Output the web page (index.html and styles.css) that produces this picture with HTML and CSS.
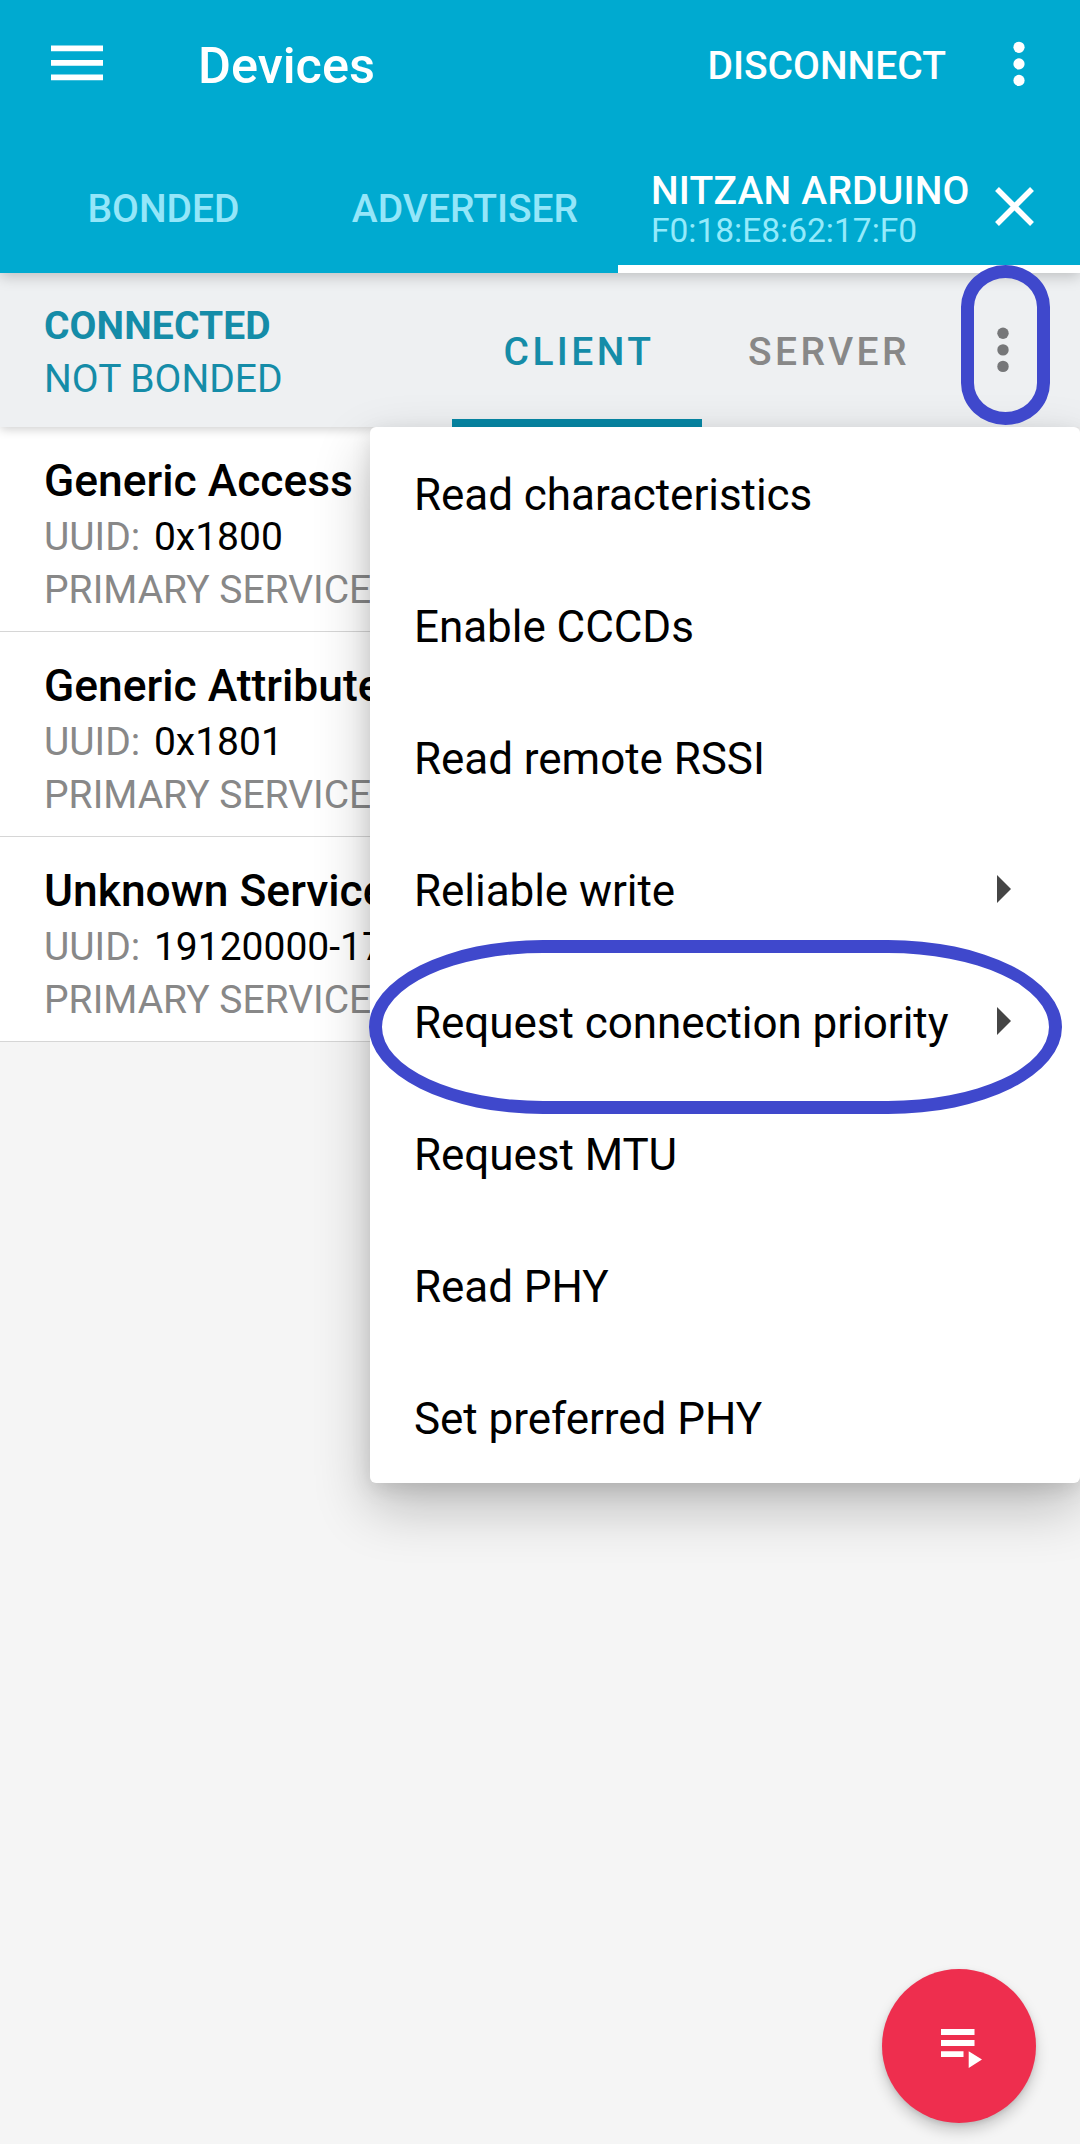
FILE: index.html
```html
<!DOCTYPE html>
<html lang="en">
<head>
<meta charset="utf-8">
<title>Devices</title>
<link rel="stylesheet" href="styles.css">
</head>
<body>
<div class="screen">
  <header class="appbar">
    <div class="toolbar">
      <svg class="menu-icon" viewBox="0 0 52 36"><path d="M0 .5h52v5.7H0zM0 15h52v5.7H0zM0 29.5h52v5.7H0z"/></svg>
      <h1 class="title">Devices</h1>
      <span class="action">DISCONNECT</span>
      <svg class="dots dots-light" viewBox="0 0 12 46"><circle cx="6" cy="6.3" r="5.6"/><circle cx="6" cy="22.9" r="5.6"/><circle cx="6" cy="39.4" r="5.6"/></svg>
    </div>
    <nav class="tabs">
      <span class="tab tab-bonded">BONDED</span>
      <span class="tab tab-advertiser">ADVERTISER</span>
      <div class="tab tab-device">
        <div class="device">
          <span class="device-name">NITZAN ARDUINO</span>
          <span class="device-address">F0:18:E8:62:17:F0</span>
        </div>
        <svg class="close" viewBox="0 0 39 39"><path d="M2 2l35 35M37 2L2 37"/></svg>
      </div>
    </nav>
  </header>

  <section class="statusbar">
    <div class="status">
      <strong class="status-link">CONNECTED</strong>
      <span class="status-bond">NOT BONDED</span>
    </div>
    <span class="role role-active">CLIENT</span>
    <span class="role">SERVER</span>
    <svg class="dots dots-dark" viewBox="0 0 12 46"><circle cx="6" cy="6.3" r="5.7"/><circle cx="6" cy="22.9" r="5.7"/><circle cx="6" cy="39.4" r="5.7"/></svg>
  </section>

  <main class="services">
    <article class="service">
      <h2 class="service-name">Generic Access</h2>
      <p class="service-line">UUID: <span class="uuid">0x1800</span></p>
      <p class="service-line">PRIMARY SERVICE</p>
    </article>
    <article class="service">
      <h2 class="service-name">Generic Attribute</h2>
      <p class="service-line">UUID: <span class="uuid">0x1801</span></p>
      <p class="service-line">PRIMARY SERVICE</p>
    </article>
    <article class="service">
      <h2 class="service-name">Unknown Service</h2>
      <p class="service-line">UUID: <span class="uuid">19120000-17</span></p>
      <p class="service-line">PRIMARY SERVICE</p>
    </article>
  </main>

  <div class="popup">
    <div class="option">Read characteristics</div>
    <div class="option">Enable CCCDs</div>
    <div class="option">Read remote RSSI</div>
    <div class="option">Reliable write<svg class="arrow" viewBox="0 0 14 28"><path d="M0 0l14 14L0 28z"/></svg></div>
    <div class="option">Request connection priority<svg class="arrow" viewBox="0 0 14 28"><path d="M0 0l14 14L0 28z"/></svg></div>
    <div class="option">Request MTU</div>
    <div class="option">Read PHY</div>
    <div class="option">Set preferred PHY</div>
  </div>

  <div class="mark mark-overflow"></div>
  <div class="mark mark-priority"></div>

  <div class="fab">
    <svg class="fab-icon" viewBox="0 0 42 40"><path d="M0 0h33.5v6H0zM0 11h33.5v6H0zM0 22.3h22.5v5.6H0zM27.7 22.3l13.3 8.3-13.3 8.3z"/></svg>
  </div>
</div>
</body>
</html>
```
FILE: styles.css
```css
* { box-sizing: border-box; margin: 0; padding: 0; }
body { font-family: Roboto, "Noto Sans", sans-serif; font-size: 39px; background: #f5f5f5; }
svg { display: block; flex: none; }

.screen { position: relative; width: 1080px; height: 2144px; overflow: hidden; background: #f5f5f5; }

.appbar { position: relative; z-index: 2; height: 273px; background: #00aad0; color: #fff; box-shadow: 0 3px 14px rgba(0, 0, 0, .22); }
.toolbar { display: flex; align-items: center; height: 141px; padding: 0 55px 12px 51px; }
.menu-icon { width: 52px; height: 36px; margin-top: -3px; fill: #fff; }
.title { margin-left: 95px; padding-top: 2px; font-size: 50.5px; font-weight: 500; line-height: 60px; }
.action { margin-left: auto; padding-top: 2px; font-weight: 500; }
.dots { width: 12px; height: 46px; }
.dots-light { margin-left: 67px; margin-top: -2px; fill: #fff; }

.tabs { display: flex; height: 132px; padding-left: 15px; }
.tab { display: flex; align-items: center; justify-content: center; padding-top: 3px; font-weight: 500; color: #94e6f9; }
.tab-bonded { width: 297px; }
.tab-advertiser { width: 306px; }
.tab-device { flex: 1; justify-content: flex-start; padding: 0 46px 0 33px; border-bottom: 8px solid #fff; color: #fff; }
.device { display: flex; flex-direction: column; flex: 1; padding-top: 13px; white-space: nowrap; }
.device-name { line-height: 42px; letter-spacing: .2px; }
.device-address { font-size: 33.5px; font-weight: 400; line-height: 37px; color: #94eafb; }
.close { width: 39px; height: 39px; margin-top: 6px; fill: none; stroke: #fff; stroke-width: 5.5; }

.statusbar { position: relative; z-index: 1; display: flex; height: 154px; background: #eef0f2; box-shadow: 0 2px 10px rgba(0, 0, 0, .2); }
.status { display: flex; flex-direction: column; width: 452px; padding: 27px 0 0 44px; line-height: 53px; color: #158ca8; }
.status-link { font-weight: 700; letter-spacing: .1px; }
.role { display: flex; align-items: center; justify-content: center; width: 250px; padding: 12px 0 0 4px; border-bottom: 8px solid transparent; font-weight: 500; letter-spacing: 3.4px; color: #888; }
.role-active { color: #158ca8; border-color: #0788a6; }
.dots-dark { margin: 54px 0 0 45px; fill: #767779; }

.service { height: 205px; padding: 24px 0 0 44px; background: #fff; border-bottom: 1px solid #d6d6d6; }
.service-name { margin-bottom: -1px; font-size: 44.4px; font-weight: 500; line-height: 61px; color: #000; }
.service-line { line-height: 53px; color: #888; white-space: nowrap; }
.uuid { margin-left: 4px; color: #000; }

.popup { position: absolute; z-index: 3; top: 427px; left: 370px; width: 710px; border-radius: 6px; background: #fff; box-shadow: 0 24px 56px rgba(0, 0, 0, .24), 0 6px 20px rgba(0, 0, 0, .1); }
.option { display: flex; align-items: center; justify-content: space-between; height: 132px; padding: 3px 69px 0 44px; font-size: 44px; letter-spacing: -.05px; color: #000; white-space: nowrap; }
.arrow { width: 14px; height: 28px; margin-top: -3px; fill: #454545; }

.mark { position: absolute; z-index: 4; border: 13px solid #3f48cc; }
.mark-overflow { left: 961px; top: 265px; width: 89px; height: 160px; border-radius: 44.5px / 42px; }
.mark-priority { left: 369px; top: 940px; width: 693px; height: 174px; border-radius: 174px / 87px; }

.fab { position: absolute; left: 882px; top: 1969px; display: flex; width: 154px; height: 154px; padding: 60px 0 0 58.5px; border-radius: 50%; background: #ee2e4e; box-shadow: 0 8px 14px rgba(0, 0, 0, .18), 0 2px 5px rgba(0, 0, 0, .1); }
.fab-icon { width: 42px; height: 40px; fill: #fff; }
```
